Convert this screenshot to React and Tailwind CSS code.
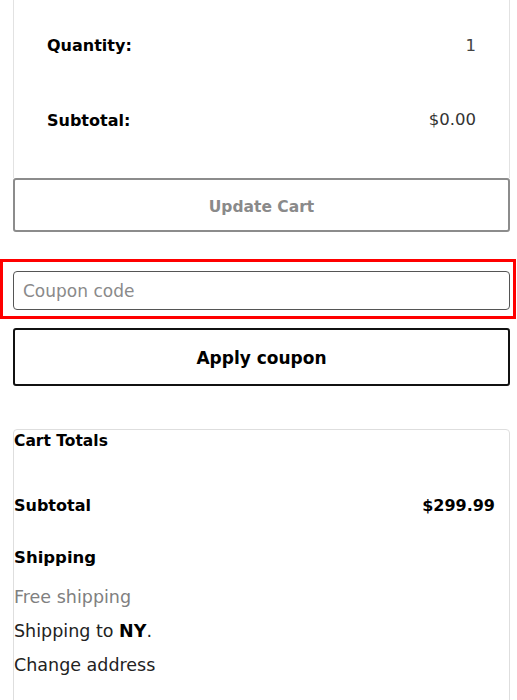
import React from 'react';

export default function App() {
  return (
    <div className="min-h-[700px] bg-white font-['DejaVu_Sans',sans-serif] text-black">
      <div className="ml-[13px] w-[497px]">
        {/* Cart item summary */}
        <div className="flex h-[178px] flex-col border-x border-[#e2e2e2] px-[33px]">
          <div className="flex h-[91px] items-center justify-between pt-[1px]">
            <span className="text-[16px] font-bold">Quantity:</span>
            <span className="text-[16.5px] text-[#444]">1</span>
          </div>
          <div className="flex h-[58px] items-center justify-between pt-[1px]">
            <span className="text-[16px] font-bold">Subtotal:</span>
            <span className="text-[16.5px] text-[#333]">$0.00</span>
          </div>
        </div>

        <button className="flex h-[54px] w-full items-center justify-center rounded-[3px] border-2 border-[#8c8c8c] pt-[5px] text-[15.5px] font-bold text-[#8a8a8a]">
          Update Cart
        </button>

        {/* Coupon */}
        <div className="relative mt-[39px]">
          <input
            type="text"
            placeholder="Coupon code"
            className="block h-[39px] w-full rounded-[4px] border border-[#555] pl-[9px] text-[17px] outline-none placeholder:text-[#8a8a8a]"
          />
          <div className="pointer-events-none absolute -left-[13px] -top-[12px] h-[60px] w-[516px] border-[3px] border-[#ff0000]" />
        </div>

        <button className="mt-[18px] flex h-[58px] w-full items-center justify-center rounded-[3px] border-2 border-[#111] pt-[4px] text-[17px] font-bold">
          Apply coupon
        </button>

        {/* Cart totals */}
        <div className="mt-[43px] h-[300px] rounded-[4px] border border-[#dedede] pr-[14px]">
          <div className="mt-[2px] flex h-[20px] items-center text-[15.5px] font-bold">Cart Totals</div>
          <div className="mt-[42px] flex h-[24px] items-center justify-between text-[16px] font-bold">
            <span>Subtotal</span>
            <span>$299.99</span>
          </div>
          <div className="mt-[23px] flex h-[34px] items-center text-[16.5px] font-bold">Shipping</div>
          <div className="mt-[5px] flex h-[34px] items-center text-[17.5px] text-[#808080]">Free shipping</div>
          <div className="flex h-[34px] items-center text-[17.5px] text-[#222]">
            <span>
              Shipping to <strong className="font-bold text-black">NY</strong>.
            </span>
          </div>
          <div className="flex h-[34px] items-center text-[17.5px] text-[#222]">Change address</div>
        </div>
      </div>
    </div>
  );
}
